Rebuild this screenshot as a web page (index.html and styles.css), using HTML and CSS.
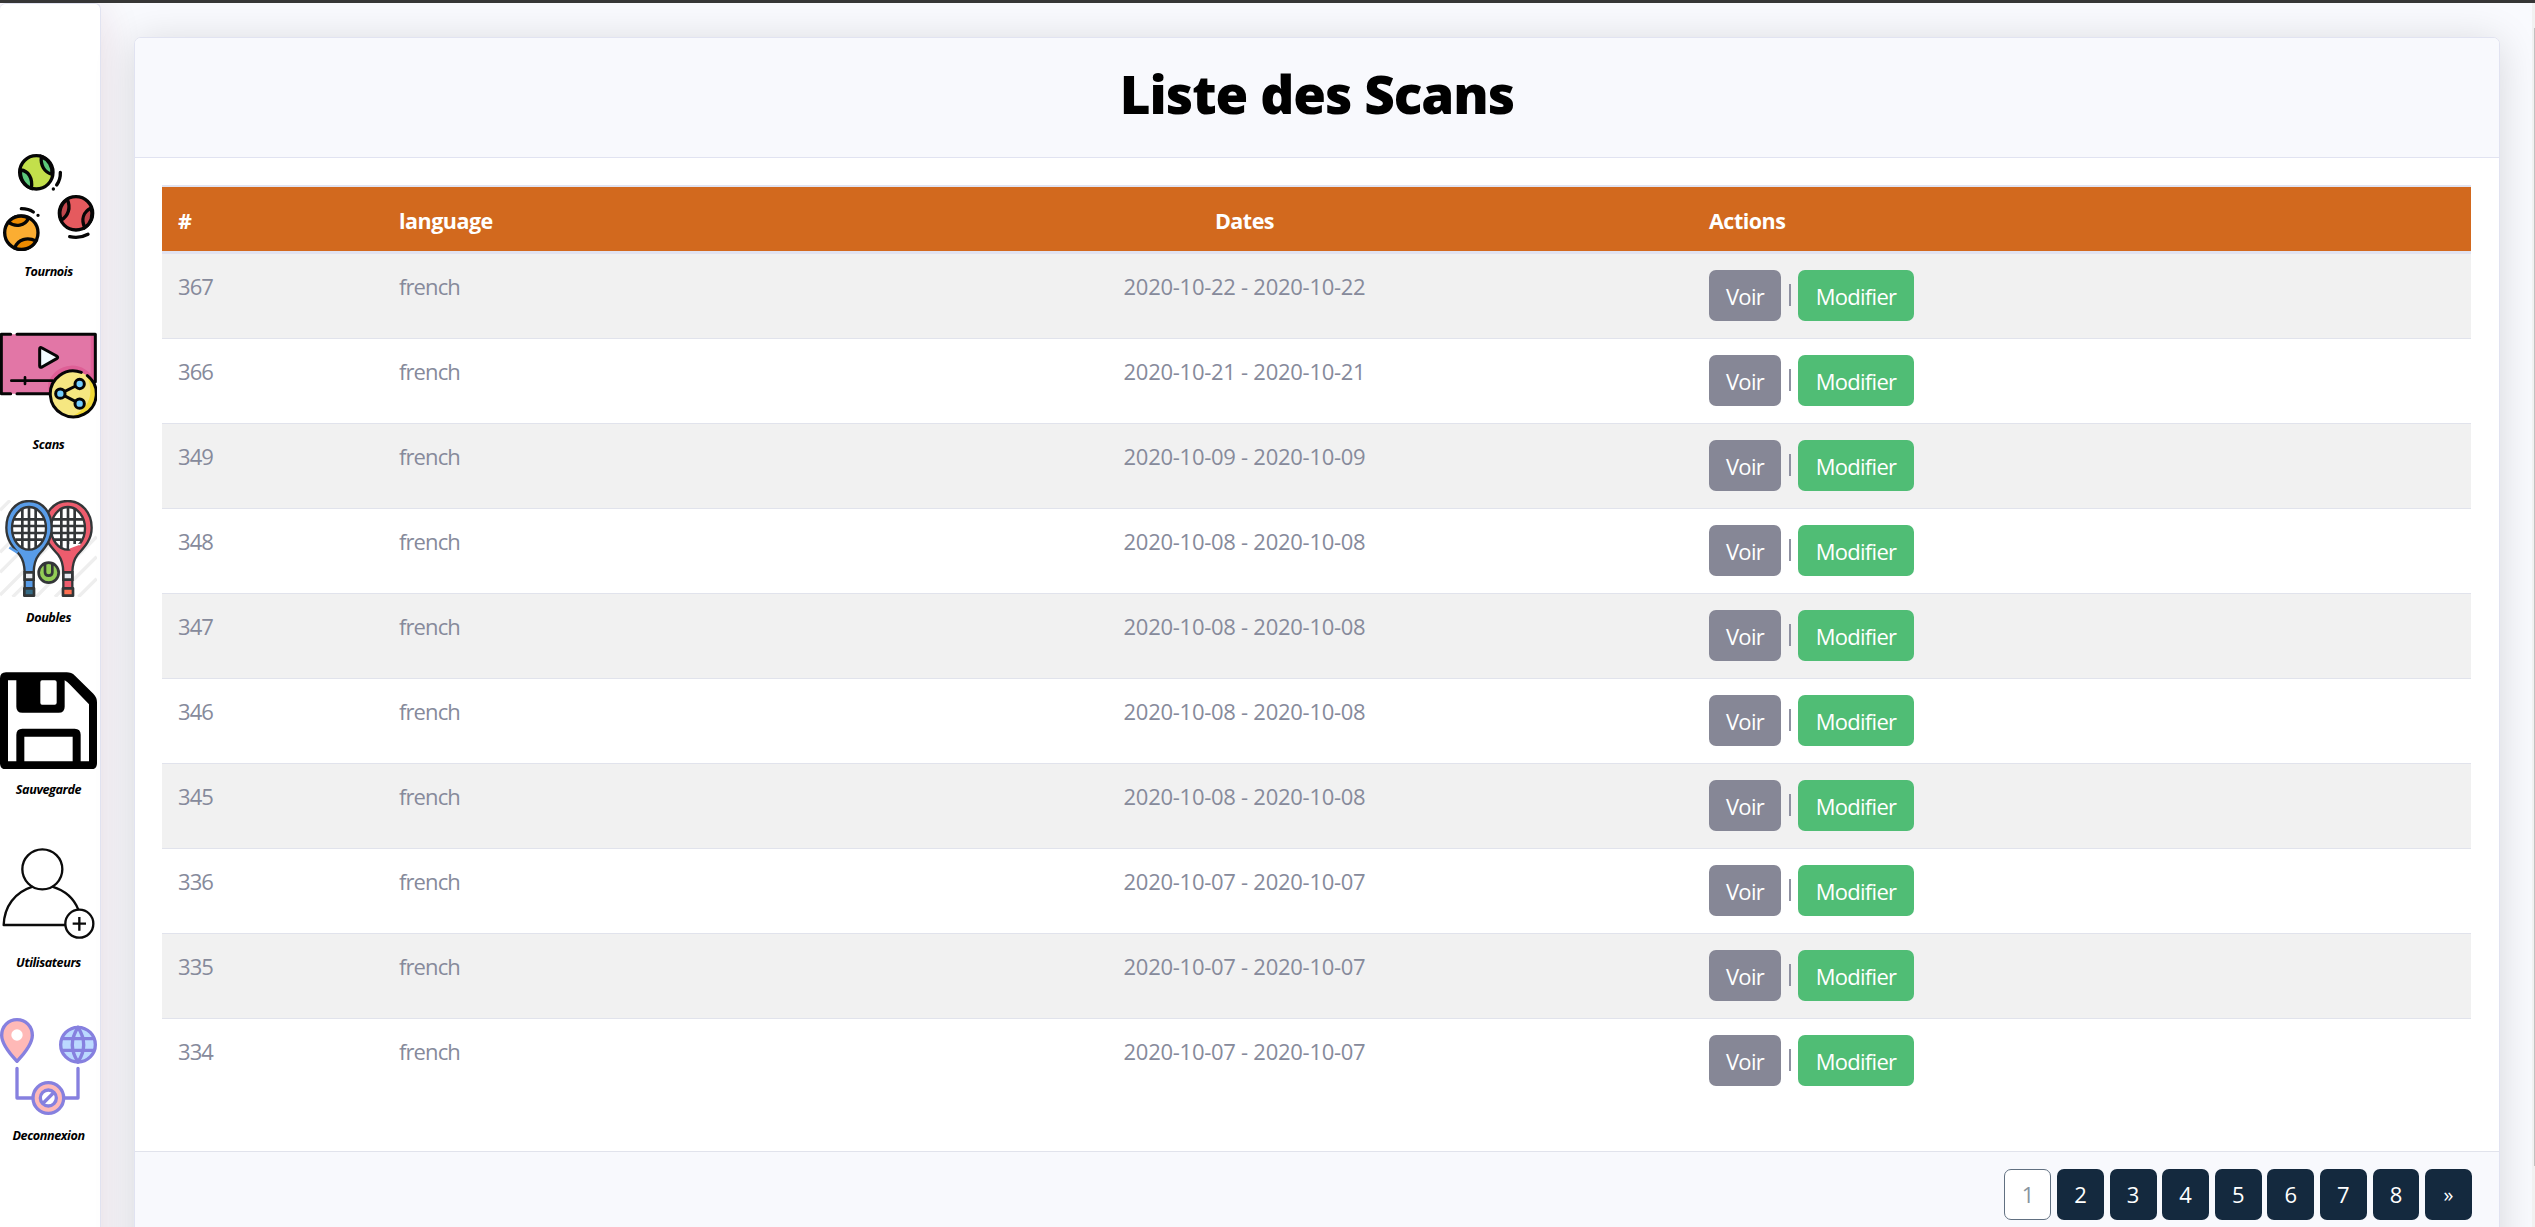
FILE: index.html
```
<!DOCTYPE html>
<html lang="fr">
<head>
<meta charset="utf-8">
<title>Liste des Scans</title>
<link rel="stylesheet" href="styles.css">
</head>
<body>
<div class="topline"></div>
<div class="layout">
  <nav class="sidebar">
    <a class="nav-item">
      <svg class="nav-icon" viewBox="0 42 291 291" fill="none" stroke="#060606" stroke-width="10" stroke-linecap="round">
        <circle cx="109" cy="97" r="50" fill="#c3e04b"/>
        <path d="M124 50C121 76 133 97 156 103A50 50 0 0 0 124 50ZM62 90C85 92 99 114 94 145A50 50 0 0 1 62 90Z" fill="#5cc97a"/>
        <path d="M181 97Q182 118 170 135M160 147h.1M64 206Q86 206 100 216M114 226h.1M209 290Q238 297 264 283"/>
        <circle cx="228" cy="220" r="50" fill="#e55a5e"/>
        <path d="M202 178C213 203 205 228 184 240A50 50 0 0 1 202 178ZM273 204C250 216 243 238 254 263A50 50 0 0 0 273 204Z" fill="#c1464c"/>
        <circle cx="64" cy="278" r="50" fill="#fbad32"/>
        <path d="M25 246C46 263 75 258 86 234A50 50 0 0 0 25 246ZM44 324C53 298 82 290 108 303A50 50 0 0 1 44 324Z" fill="#ed8b00"/>
      </svg>
      <span class="nav-label">Tournois</span>
    </a>
    <a class="nav-item">
      <svg class="nav-icon" viewBox="0 51 291 291" fill="none" stroke="#060606" stroke-width="9" stroke-linecap="round" stroke-linejoin="round">
        <path d="M4 73H286V251H4Z" fill="#e276a6" stroke="none"/>
        <path d="M272 76h12v150h-12ZM145 218A75 75 0 0 1 284 210L280 250H145Z" fill="#de5f96" stroke="none"/>
        <path d="M32 73H4V251H32M51 73H286V215M51 251H150"/>
        <path d="M34 212H158M75 202v20" stroke-width="8"/>
        <path d="M119 117Q119 110 126 114L170 138Q176 142 170 146L126 171Q119 174 119 167Z" fill="#f4fbff"/>
        <circle cx="218" cy="251" r="69" fill="#f6e781" stroke="none"/>
        <path d="M263 200A67 67 0 0 1 220 317Q292 280 263 200Z" fill="#f2da37" stroke="none"/>
        <path d="M244 187A69 69 0 1 0 262 197"/>
        <path d="M239 222L181 251L239 281"/>
        <g fill="#73cfff"><circle cx="239" cy="222" r="14"/><circle cx="181" cy="251" r="14"/><circle cx="239" cy="281" r="14"/></g>
      </svg>
      <span class="nav-label">Scans</span>
    </a>
    <a class="nav-item">
      <svg class="nav-icon" viewBox="0 45 291 291" fill="none" stroke="#333638">
        <path d="M0 76L30 46M0 202L50 152M0 262L75 187M0 330L75 255M115 215L150 180M38 336L70 304M108 336L190 254M220 225L290 155M165 336L190 311M220 285L290 215M235 336L290 281" stroke="#eeeeee" stroke-width="10"/>
        <path d="M203 48C245 48 275 83 275 128C275 170 245 194 232 210Q218 228 217 262V312H190V262Q189 228 175 210C162 194 132 170 132 128C132 83 162 48 203 48Z" fill="#ed5c6d" stroke-width="7"/>
        <ellipse cx="204" cy="130" rx="51" ry="64" fill="#fff" stroke-width="7"/>
        <path d="M158 103H250M154 123H254M155 144H253M162 164H245M184 72V188M204 66V194M224 72V178" stroke-width="8"/>
        <path d="M208 193V178L244 176Q229 194 208 193Z" fill="#fff" stroke="none"/><path d="M211 195L239 184" stroke="#ed5c6d" stroke-width="9"/>
        <path d="M87 48C129 48 155 83 155 128C155 170 129 194 116 210Q102 228 101 262V312H74V262Q73 228 59 210C46 194 19 170 19 128C19 83 46 48 87 48Z" fill="#589ce8" stroke-width="7"/>
        <ellipse cx="87" cy="130" rx="51" ry="64" fill="#fff" stroke-width="7"/>
        <path d="M41 103H133M37 123H137M38 144H136M46 164H128M67 72V188M87 66V194M107 72V188" stroke-width="8"/>
        <path d="M28 187L53 203" stroke="#589ce8" stroke-width="8"/>
        <path d="M74 262H101V284H74ZM190 262H217V284H190Z" fill="#e6eaf0" stroke-width="8"/>
        <path d="M73 310H102V332H73Z" fill="#356b86" stroke-width="8" stroke-linejoin="round"/>
        <path d="M189 310H219V332H189Z" fill="#ff7052" stroke-width="8" stroke-linejoin="round"/>
        <circle cx="146" cy="263" r="30" fill="#92cd56" stroke-width="8"/>
        <path d="M135 237V262Q135 272 146 272T157 262V237" stroke-width="8"/>
      </svg>
      <span class="nav-label">Doubles</span>
    </a>
    <a class="nav-item">
      <svg class="nav-icon" viewBox="0 38 291 291">
        <path fill-rule="evenodd" d="M18 39H200Q214 39 225 49L280 103Q291 114 291 129V312Q291 330 273 330H18Q0 330 0 312V57Q0 39 18 39ZM24 63V306H49V226Q49 208 67 208H224Q242 208 242 226V306H267V135L209 75Q202 67 194 63V142Q194 160 176 160H67Q49 160 49 142V63ZM126 63Q121 63 121 69V130Q121 136 126 136H164Q170 136 170 130V69Q170 63 164 63ZM73 232V306H218V232Z" fill="#000"/>
      </svg>
      <span class="nav-label">Sauvegarde</span>
    </a>
    <a class="nav-item">
      <svg class="nav-icon" viewBox="0 45 291 291" fill="none" stroke="#0b0b0b" stroke-width="7">
        <circle cx="127" cy="118" r="60"/>
        <path d="M98 170C44 187 13 229 11 285H196M157 170Q215 188 235 239" stroke-linejoin="round"/>
        <circle cx="238" cy="281" r="42"/>
        <path d="M238 261V302M218 281H258"/>
      </svg>
      <span class="nav-label">Utilisateurs</span>
    </a>
    <a class="nav-item">
      <svg class="nav-icon" viewBox="0 39 291 291" fill="none" stroke="#8680df" stroke-width="10" stroke-linecap="round" stroke-linejoin="round">
        <path d="M51 44C77 44 97 64 97 91C97 118 74 145 51 169C28 145 5 118 5 91C5 64 25 44 51 44Z" fill="#ffb9b7"/>
        <circle cx="51" cy="90" r="17" fill="#fff" stroke="none"/>
        <circle cx="234" cy="119" r="52" fill="#bbd9ff"/>
        <path d="M187 101H281M187 136H281M234 67Q200 119 234 171Q268 119 234 67"/>
        <path d="M51 190V279H98M234 190V279H194"/>
        <circle cx="145" cy="279" r="46" fill="#ffb9b7"/>
        <circle cx="145" cy="279" r="24" fill="#fff"/>
        <path d="M130 294L160 264"/>
      </svg>
      <span class="nav-label">Deconnexion</span>
    </a>
  </nav>
  <main class="card">
    <header class="card-header"><h1 class="title">Liste des Scans</h1></header>
    <section class="card-body">
      <table class="table">
        <colgroup><col class="c-id"><col class="c-lang"><col class="c-dates"><col class="c-actions"></colgroup>
        <thead><tr><th>#</th><th>language</th><th class="center">Dates</th><th>Actions</th></tr></thead>
        <tbody>
          <tr><td>367</td><td>french</td><td class="center dates">2020-10-22 - 2020-10-22</td><td><div class="actions"><a class="btn voir">Voir</a><span class="sep"></span><a class="btn modifier">Modifier</a></div></td></tr>
          <tr><td>366</td><td>french</td><td class="center dates">2020-10-21 - 2020-10-21</td><td><div class="actions"><a class="btn voir">Voir</a><span class="sep"></span><a class="btn modifier">Modifier</a></div></td></tr>
          <tr><td>349</td><td>french</td><td class="center dates">2020-10-09 - 2020-10-09</td><td><div class="actions"><a class="btn voir">Voir</a><span class="sep"></span><a class="btn modifier">Modifier</a></div></td></tr>
          <tr><td>348</td><td>french</td><td class="center dates">2020-10-08 - 2020-10-08</td><td><div class="actions"><a class="btn voir">Voir</a><span class="sep"></span><a class="btn modifier">Modifier</a></div></td></tr>
          <tr><td>347</td><td>french</td><td class="center dates">2020-10-08 - 2020-10-08</td><td><div class="actions"><a class="btn voir">Voir</a><span class="sep"></span><a class="btn modifier">Modifier</a></div></td></tr>
          <tr><td>346</td><td>french</td><td class="center dates">2020-10-08 - 2020-10-08</td><td><div class="actions"><a class="btn voir">Voir</a><span class="sep"></span><a class="btn modifier">Modifier</a></div></td></tr>
          <tr><td>345</td><td>french</td><td class="center dates">2020-10-08 - 2020-10-08</td><td><div class="actions"><a class="btn voir">Voir</a><span class="sep"></span><a class="btn modifier">Modifier</a></div></td></tr>
          <tr><td>336</td><td>french</td><td class="center dates">2020-10-07 - 2020-10-07</td><td><div class="actions"><a class="btn voir">Voir</a><span class="sep"></span><a class="btn modifier">Modifier</a></div></td></tr>
          <tr><td>335</td><td>french</td><td class="center dates">2020-10-07 - 2020-10-07</td><td><div class="actions"><a class="btn voir">Voir</a><span class="sep"></span><a class="btn modifier">Modifier</a></div></td></tr>
          <tr><td>334</td><td>french</td><td class="center dates">2020-10-07 - 2020-10-07</td><td><div class="actions"><a class="btn voir">Voir</a><span class="sep"></span><a class="btn modifier">Modifier</a></div></td></tr>
        </tbody>
      </table>
    </section>
    <footer class="card-footer">
      <a class="page current">1</a><a class="page">2</a><a class="page">3</a><a class="page">4</a><a class="page">5</a><a class="page">6</a><a class="page">7</a><a class="page">8</a><a class="page next">»</a>
    </footer>
  </main>
  <div class="scrollbar"><div class="thumb"></div></div>
</div>
</body>
</html>
```
FILE: styles.css
```
* { box-sizing: border-box; }

body {
  margin: 0;
  height: 1227px;
  overflow: hidden;
  background: #f9fafe;
  color: #868a9b;
  font: 22px/33px "Open Sans", "Noto Sans", sans-serif;
}

.topline { height: 3px; background: #363636; }

.layout {
  display: flex;
  height: 1224px;
  overflow: hidden;
}

/* Sidebar */
.sidebar {
  flex: none;
  width: 101px;
  height: 1300px;
  padding-top: 150px;
  background: #fff;
  border: 1px solid #e1e3f1;
  border-left: 0;
  border-radius: 6px;
  box-shadow: 0 8px 42px rgba(110, 20, 40, .14);
}
.nav-item { display: block; height: 172.8px; color: #000; }
.nav-icon { display: block; width: 97px; height: 97px; }
.nav-label {
  display: block;
  width: 97px;
  padding-top: 12px;
  text-align: center;
  white-space: nowrap;
  font-size: 12.6px;
  line-height: 18px;
  font-weight: 700;
  font-style: italic;
  letter-spacing: -.4px;
}

/* Card */
.card {
  flex: none;
  width: 2366px;
  height: 1300px;
  margin: 34px 0 0 33px;
  background: #fff;
  border: 1px solid #e1e3f1;
  border-radius: 7px;
  box-shadow: 0 4px 42px rgba(0, 0, 0, .14);
}
.card-header {
  height: 120px;
  background: #f8f9fd;
  border-bottom: 1px solid #e1e3f1;
  border-radius: 6px 6px 0 0;
}
.title {
  margin: 0;
  padding-top: 20px;
  text-align: center;
  font-size: 53px;
  line-height: 72px;
  font-weight: 800;
  letter-spacing: -1px;
  color: #000;
}
.card-body { height: 993px; padding: 27px; }

/* Table */
.table {
  width: 2309px;
  table-layout: fixed;
  border-collapse: separate;
  border-spacing: 0;
}
.c-id { width: 221px; }
.c-lang { width: 413px; }
.c-dates { width: 897px; }
.c-actions { width: 778px; }
th, td { text-align: left; vertical-align: top; }
th {
  height: 69px;
  padding: 17px 16px 0;
  background: #d2691e;
  color: #fff;
  font-size: 21.5px;
  font-weight: 700;
  letter-spacing: -.5px;
  border-top: 2px solid #e1e3f1;
  border-bottom: 3px solid #e1e3f1;
}
td {
  height: 85px;
  padding: 16px 16px 0;
  letter-spacing: -.9px;
  border-bottom: 1px solid #e1e3ec;
}
tbody tr:nth-child(odd) td { background: #f1f1f1; }
tbody tr:last-child td { border-bottom: 0; }
.center { text-align: center; }
.dates { letter-spacing: -.27px; }

.actions { display: flex; }
.btn {
  height: 51px;
  padding-top: 10px;
  border-radius: 7px;
  color: #fff;
  text-align: center;
  letter-spacing: -.7px;
}
.voir { width: 72px; background: #868796; }
.modifier { width: 116px; background: #50bd75; }
.sep {
  width: 2px;
  height: 22px;
  margin: 14px 7px 0 8px;
  background: #8f91a2;
}

/* Pagination */
.card-footer {
  display: flex;
  justify-content: flex-end;
  gap: 5.7px;
  height: 185px;
  padding: 17px 27px 0 0;
  background: #f8f9fd;
  border-top: 1px solid #e1e3ec;
}
.page {
  width: 46.9px;
  height: 51px;
  padding-top: 9px;
  border-radius: 7px;
  background: #14293e;
  color: #fff;
  text-align: center;
}
.current {
  padding-top: 8px;
  background: #fff;
  border: 1px solid #617081;
  color: #89949e;
}
.next { font-size: 20px; }

/* Page scrollbar */
.scrollbar {
  flex: none;
  width: 3px;
  margin-left: auto;
  padding: 25px 0 0 2px;
  background: #f1f1f1;
  z-index: 1;
}
.thumb { height: 1138px; background: #c1c1c1; }
```
